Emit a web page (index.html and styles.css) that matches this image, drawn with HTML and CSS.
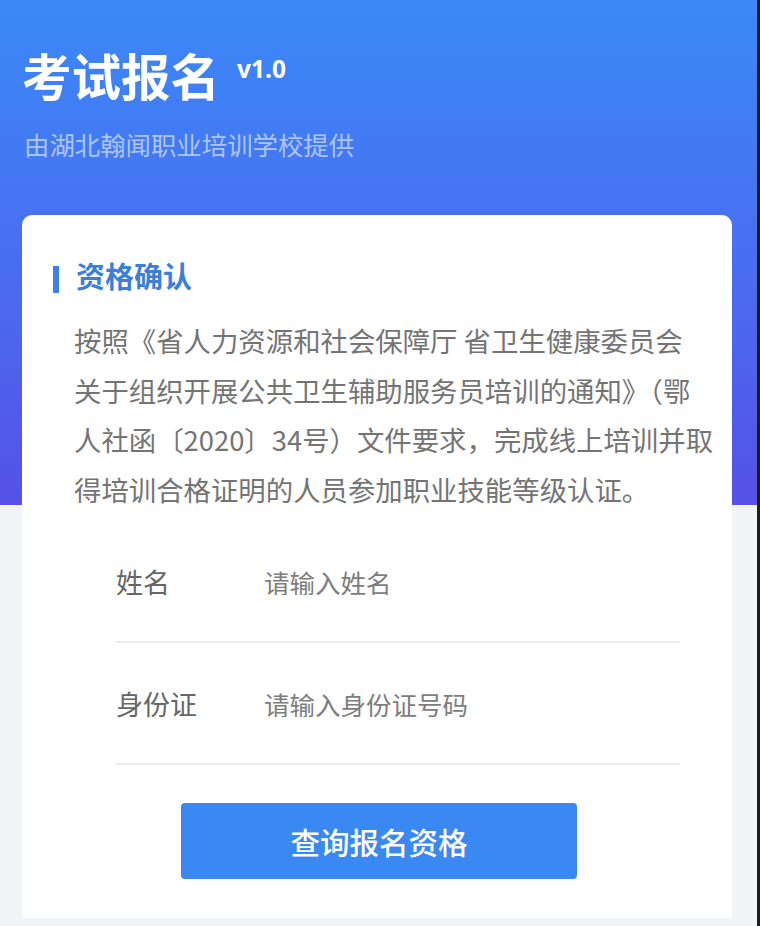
FILE: index.html
```html
<!DOCTYPE html>
<html lang="zh-CN">
<head>
<meta charset="utf-8">
<title>考试报名</title>
<link rel="stylesheet" href="styles.css">
</head>
<body>
<div class="page">
  <header class="hero">
    <div class="title-row">
      <h1 class="title">考试报名</h1>
      <span class="version">v1.0</span>
    </div>
    <p class="subtitle">由湖北翰闻职业培训学校提供</p>
  </header>
  <main class="card">
    <h2 class="section-title"><span class="bar"></span>资格确认</h2>
    <p class="desc">按照《省人力资源和社会保障厅 省卫生健康委员会<br>关于组织开展公共卫生辅助服务员培训的通知》（鄂<br>人社函〔2020〕34号）文件要求，完成线上培训并取<br>得培训合格证明的人员参加职业技能等级认证。</p>
    <form class="form">
      <label class="row">
        <span class="label">姓名</span>
        <input class="input" type="text" placeholder="请输入姓名">
      </label>
      <label class="row">
        <span class="label">身份证</span>
        <input class="input" type="text" placeholder="请输入身份证号码">
      </label>
      <button class="submit" type="button">查询报名资格</button>
    </form>
  </main>
</div>
</body>
</html>
```
FILE: styles.css
```css
html, body {
  margin: 0;
  padding: 0;
}
body {
  background: #1c1c1e;
  font-family: "Noto Sans CJK SC", "Noto Sans", sans-serif;
}
.page {
  width: 757px;
  min-height: 926px;
  background: linear-gradient(to bottom, #3a89f8 0%, #4a6cef 55%, #5551e5 100%) top left / 100% 505px no-repeat, #f3f4f7;
  padding-bottom: 1px;
  box-sizing: border-box;
}
.hero {
  padding: 51px 0 0 22px;
}
.title-row {
  display: flex;
  align-items: flex-start;
}
.title {
  margin: 0;
  font-size: 49.5px;
  line-height: 48px;
  font-weight: 700;
  color: #ffffff;
}
.version {
  margin-left: 17px;
  margin-top: 6px;
  font-family: "Noto Sans", sans-serif;
  font-size: 24.5px;
  line-height: 24px;
  font-weight: 700;
  color: #ffffff;
}
.subtitle {
  margin: 32px 0 0 2px;
  font-size: 25.4px;
  line-height: 26px;
  color: rgba(255, 255, 255, 0.58);
}
.card {
  margin: 58px 0 0 22px;
  width: 710px;
  background: #ffffff;
  border-radius: 10px 10px 0 0;
  padding: 46px 0 39px;
  box-sizing: border-box;
}
.section-title {
  margin: 0 0 0 31px;
  display: flex;
  align-items: flex-start;
  font-size: 29px;
  line-height: 29px;
  font-weight: 700;
  color: #3b7fd8;
}
.bar {
  width: 6px;
  height: 27px;
  margin-top: 5px;
  margin-right: 17px;
  background: #3a82e6;
}
.desc {
  margin: 23px 0 0 52px;
  font-size: 27.4px;
  line-height: 49.7px;
  color: #747474;
  white-space: nowrap;
}
.form {
  margin: 6px 0 0 94px;
  width: 564px;
}
.row {
  display: flex;
  align-items: center;
  padding: 47px 0 46px;
  border-bottom: 2px solid #ececee;
}
.label {
  width: 148px;
  font-size: 27px;
  line-height: 27px;
  color: #666666;
}
.input {
  flex: 1;
  border: 0;
  outline: none;
  padding: 0;
  margin: 0;
  background: transparent;
  font-family: "Noto Sans CJK SC", "Noto Sans", sans-serif;
  font-size: 25.5px;
  line-height: 27px;
  height: 27px;
  color: #333333;
}
.input::placeholder {
  color: #7d7d7d;
}
.submit {
  display: block;
  margin: 38px 0 0 65px;
  width: 396px;
  height: 76px;
  border: 0;
  border-radius: 4px;
  background: #3a88f2;
  color: #ffffff;
  font-family: "Noto Sans CJK SC", "Noto Sans", sans-serif;
  font-size: 29.5px;
  font-weight: 500;
  cursor: pointer;
}
```
